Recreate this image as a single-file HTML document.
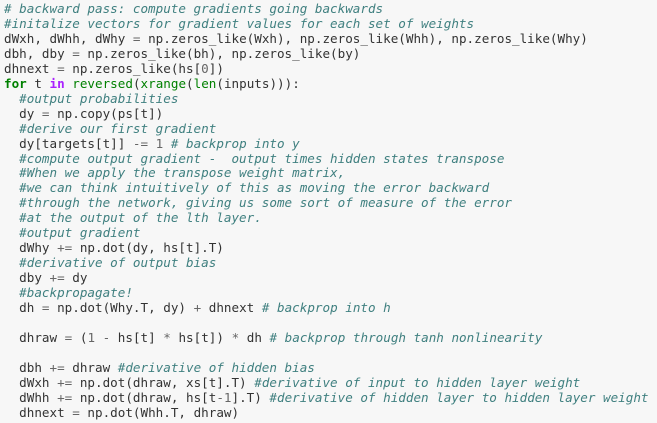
<!DOCTYPE html><html><head><style>
html,body{margin:0;padding:0;background:#f7f7f7;width:657px;height:423px;overflow:hidden}
pre{margin:0;padding:2px 0 0 4px;font-family:"DejaVu Sans Mono",monospace;font-size:12.6px;line-height:14.95px;color:#333}
.c{color:#408080;font-style:italic}.k{color:#008000;font-weight:bold}.o{color:#aa22ff;font-weight:bold}.b{color:#008000}.p{color:#666}
</style></head><body><pre><span class="c"># backward pass: compute gradients going backwards</span>
<span class="c">#initalize vectors for gradient values for each set of weights</span>
dWxh, dWhh, dWhy <span class="p">=</span> np.zeros_like(Wxh), np.zeros_like(Whh), np.zeros_like(Why)
dbh, dby <span class="p">=</span> np.zeros_like(bh), np.zeros_like(by)
dhnext <span class="p">=</span> np.zeros_like(hs[<span class="p">0</span>])
<span class="k">for</span> t <span class="o">in</span> <span class="b">reversed</span>(<span class="b">xrange</span>(<span class="b">len</span>(inputs))):
  <span class="c">#output probabilities</span>
  dy <span class="p">=</span> np.copy(ps[t])
  <span class="c">#derive our first gradient</span>
  dy[targets[t]] <span class="p">-=</span> <span class="p">1</span> <span class="c"># backprop into y</span>
  <span class="c">#compute output gradient -  output times hidden states transpose</span>
  <span class="c">#When we apply the transpose weight matrix,</span>
  <span class="c">#we can think intuitively of this as moving the error backward</span>
  <span class="c">#through the network, giving us some sort of measure of the error</span>
  <span class="c">#at the output of the lth layer.</span>
  <span class="c">#output gradient</span>
  dWhy <span class="p">+=</span> np.dot(dy, hs[t].T)
  <span class="c">#derivative of output bias</span>
  dby <span class="p">+=</span> dy
  <span class="c">#backpropagate!</span>
  dh <span class="p">=</span> np.dot(Why.T, dy) <span class="p">+</span> dhnext <span class="c"># backprop into h</span>

  dhraw <span class="p">=</span> (<span class="p">1</span> <span class="p">-</span> hs[t] <span class="p">*</span> hs[t]) <span class="p">*</span> dh <span class="c"># backprop through tanh nonlinearity</span>

  dbh <span class="p">+=</span> dhraw <span class="c">#derivative of hidden bias</span>
  dWxh <span class="p">+=</span> np.dot(dhraw, xs[t].T) <span class="c">#derivative of input to hidden layer weight</span>
  dWhh <span class="p">+=</span> np.dot(dhraw, hs[t<span class="p">-1</span>].T) <span class="c">#derivative of hidden layer to hidden layer weight</span>
  dhnext <span class="p">=</span> np.dot(Whh.T, dhraw)
</pre></body></html>
